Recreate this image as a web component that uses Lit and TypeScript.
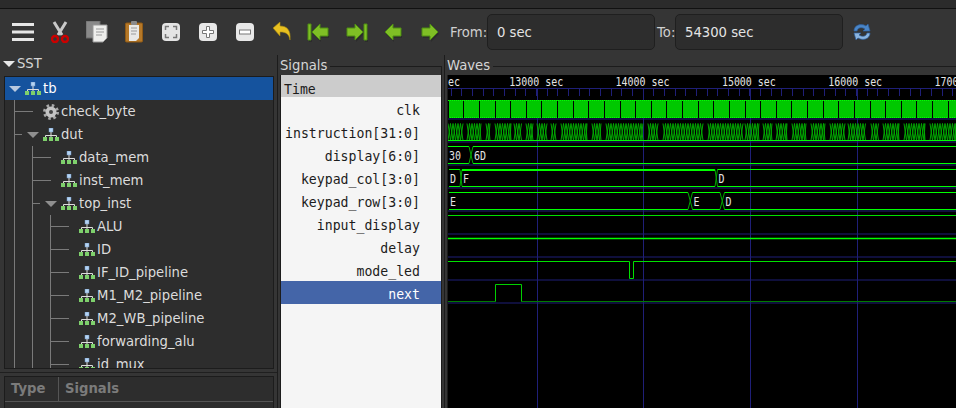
import { LitElement, html, css, svg } from 'lit';
import { customElement } from 'lit/decorators.js';

const RAIL = '#00ff00';
const DIM = '#00a800';
const GRID = '#1f1f78';

const TOP = (row: number) => 100.5 + row * 23;
const BOT = (row: number) => 117.5 + row * 23;

// where the instruction bus is toggling (start, end)
const BURSTS = [
  [448, 463], [467, 481], [486, 490], [495, 511], [514, 522], [526, 533], [537, 547], [551, 556],
  [561, 587], [592, 601], [606, 643], [648, 658], [663, 703], [708, 743], [745, 759], [763, 772],
  [776, 787], [792, 806], [811, 825], [830, 845], [848, 866], [871, 879], [883, 899], [904, 925], [930, 956],
];

const SIGNALS = ['clk', 'instruction[31:0]', 'display[6:0]', 'keypad_col[3:0]', 'keypad_row[3:0]', 'input_display', 'delay', 'mode_led'];

const TREE: [string, number, string][] = [
  ['check_byte', 1, 'gear'], ['dut', 1, 'open'], ['data_mem', 2, ''], ['inst_mem', 2, ''], ['top_inst', 2, 'open'],
  ['ALU', 3, ''], ['ID', 3, ''], ['IF_ID_pipeline', 3, ''], ['M1_M2_pipeline', 3, ''], ['M2_WB_pipeline', 3, ''],
  ['forwarding_alu', 3, ''], ['id_mux', 3, ''],
];

const hier = svg`
  <rect x="6" y="0" width="4" height="4" fill="#b4d4f4" stroke="#6f93c0" stroke-width=".5"/>
  <path d="M8 4v3M2.500 9V7.500h11V9M8 7v2" stroke="#ddd" stroke-width="1" fill="none"/>
  <rect x="0" y="9" width="4" height="4" fill="#7ed06c"/>
  <rect x="6" y="9" width="4" height="4" fill="#7ed06c"/>
  <rect x="12" y="9" width="4" height="4" fill="#7ed06c"/>`;

@customElement('app-root')
export class AppRoot extends LitElement {
  static styles = css`
    :host {
      display: block;
      width: 956px;
      height: 408px;
      overflow: hidden;
      background: #353535;
      color: #dcdcdc;
      font-family: 'DejaVu Sans', sans-serif;
      font-size: 13.2px;
    }
    .menu { height: 8px; background: #2b2b2b; border-bottom: 1px solid #111; }
    .toolbar { display: flex; align-items: center; height: 46px; }
    .tool { width: 37px; height: 24px; display: flex; justify-content: center; align-items: center; flex: none; }
    .tool svg { display: block; flex: none; }
    .lead { width: 4px; flex: none; }
    .lbl { color: #cfcfcf; flex: none; }
    .from { margin-left: 2px; width: 37px; }
    .to-lbl { margin-left: 2px; width: 18px; }
    .entry {
      width: 168px;
      height: 36px;
      box-sizing: border-box;
      border: 1px solid #1f1f1f;
      border-radius: 5px;
      background: #2d2d2d;
      padding-left: 9px;
      line-height: 36px;
      color: #e4e4e4;
      flex: none;
    }
    .main { display: flex; height: 353px; }

    .left { width: 278px; flex: none; padding-left: 4px; box-sizing: border-box; border-right: 1px solid #1c1c1c; }
    .sst { height: 17px; display: flex; align-items: center; gap: 2px; margin-left: -1px; color: #d6d6d6; }
    .tree {
      margin-top: 4px;
      height: 293px;
      width: 270px;
      border: 1px solid #1c1c1c;
      background: #2d2d2d;
      overflow: hidden;
      box-sizing: border-box;
    }
    .tree-row { height: 23px; display: flex; align-items: center; position: relative; }
    .tree-row.sel { background: #15539e; color: #fff; }
    .tree-row svg { display: block; flex: none; }
    .guide { position: absolute; top: 0; width: 1px; height: 23px; background: #7a7a7a; }
    .tick { position: absolute; top: 11px; height: 1px; background: #7a7a7a; }
    .arrow {
      width: 0; height: 0; flex: none;
      border-left: 6px solid transparent;
      border-right: 6px solid transparent;
      border-top: 6px solid #8f8f8f;
    }
    .tree .arrow { margin-right: 4px; }
    .sel .arrow { border-top-color: #b8c9e0; }
    .sst .arrow { border-top-color: #e8e8e8; }
    .tree-name { margin-left: 2px; white-space: nowrap; }
    .sep { height: 1px; background: #1f1f1f; margin: 3px 0 3px -4px; width: 277px; }
    .types {
      width: 270px;
      height: 40px;
      border: 1px solid #1c1c1c;
      background: #2d2d2d;
      box-sizing: border-box;
      display: flex;
      font-weight: bold;
      color: #7b7b7b;
    }
    .types span { height: 25px; line-height: 24px; border-bottom: 1px solid #555; box-sizing: border-box; }
    .types .t { width: 54px; padding-left: 6px; border-right: 1px solid #555; box-sizing: border-box; flex: none; }
    .types .s { flex: 1; padding-left: 6px; }

    .sig { width: 167px; flex: none; box-sizing: border-box; padding-left: 2px; border-right: 1px solid #1c1c1c; }
    .pane-title {
      height: 20px;
      line-height: 22px;
      width: fit-content;
      padding-right: 3px;
      position: relative;
      background: #353535;
      color: #d6d6d6;
      white-space: nowrap;
    }
    .frame {
      margin-top: -9px;
      padding-top: 8px;
      height: 400px;
      border-top: 1px solid #1c1c1c;
      border-left: 1px solid #1c1c1c;
    }
    .sig .frame { width: 160px; border-right: 1px solid #1c1c1c; }
    .sig-list {
      height: 333px;
      background: #f5f5f5;
      color: #1c1c1c;
      font-family: 'DejaVu Sans Mono', monospace;
      font-size: 13.2px;
    }
    .sig-row {
      height: 22px;
      line-height: 26px;
      margin-bottom: 1px;
      text-align: right;
      padding-right: 21px;
      white-space: nowrap;
    }
    .sig-row.time { background: #cccccc; text-align: left; padding: 0 0 0 3px; line-height: 29px; }
    .sig-row.sel { background: #4465a8; color: #fff; height: 23px; margin-top: -1px; line-height: 28px; }

    .wave { flex: 1; min-width: 0; padding-left: 2px; }
    .wave svg { display: block; }
    .lab { font-family: 'DejaVu Sans Mono', monospace; font-size: 12px; fill: #e4e4e4; }
  `;

  tool(icon: unknown) {
    return html`<div class="tool">${icon}</div>`;
  }

  greenArrow(d: string, w = 24) {
    return svg`<svg width="${w}" height="20" viewBox="0 0 ${w} 20">
      <path d="${d}" fill="#222" opacity=".45" transform="translate(1 2)"/>
      <path d="${d}" fill="#7fbf25" stroke="#4e8f12" stroke-width="1"/>
    </svg>`;
  }

  renderTree() {
    return TREE.map(([name, depth, kind]) => {
      const guides = [];
      for (let d = 0; d < depth; d++) {
        guides.push(html`<div class="guide" style="left:${9 + d * 18}px"></div>`);
      }
      const tickLeft = 10 + (depth - 1) * 18;
      return html`<div class="tree-row">
        ${guides}
        <div class="tick" style="left:${tickLeft}px;width:${kind === 'open' ? 7 : 18}px"></div>
        <div style="width:${(kind === 'open' ? 4 : 20) + depth * 18}px;flex:none"></div>
        ${kind === 'open' ? html`<div class="arrow"></div>` : ''}
        ${kind === 'gear'
          ? html`<svg width="16" height="16" viewBox="0 0 16 16">
              <circle cx="8" cy="8" r="6.500" fill="none" stroke="#a8a8a8" stroke-width="3" stroke-dasharray="2.500 2.600"/>
              <circle cx="8" cy="8" r="5.500" fill="#c4c4c4"/><circle cx="8" cy="8" r="2" fill="#444"/>
            </svg>`
          : html`<svg width="16" height="13">${hier}</svg>`}
        <span class="tree-name">${name}</span>
      </div>`;
    });
  }

  renderWave() {
    const off = 448; // svg starts at page x 448
    const X = (x: number) => Math.round(x - off) + 0.5;
    const label = (x: number, y: number, t: string) =>
      svg`<text class="lab" xml:space="preserve" transform="translate(${x} ${y}) scale(.83 1)">${t}</text>`;
    const majors = [536.5, 643, 750, 857];
    const ticks: number[] = [];
    for (let x = 450.7; x < 960; x += 10.67) ticks.push(x);
    const clkEdges: number[] = [];
    for (let x = 447.7; x < 960; x += 15.625) clkEdges.push(x);

    const hatch: string[] = [];
    BURSTS.forEach(([a, b]) => {
      const t = TOP(1), bt = BOT(1);
      for (let x = a; x < b - 0.5; x += 2.5) {
        const e = Math.min(x + 2.5, b);
        hatch.push(`M${x - off} ${t}L${e - off} ${bt}M${x - off} ${bt}L${e - off} ${t}`);
      }
    });

    const bus = (row: number, segs: [number, number, string][]) => {
      const t = TOP(row), b = BOT(row);
      return segs.map(([a, e, text], i) => {
        const next = segs[i + 1];
        const edge = next
          ? svg`<path d="M${e - off} ${t}L${next[0] - off} ${b}M${e - off} ${b}L${next[0] - off} ${t}" stroke="${DIM}" fill="none"/>`
          : null;
        return svg`<path d="M${a - off} ${t}H${e - off}M${a - off} ${b}H${e - off}" stroke="${RAIL}" fill="none"/>
          ${edge}${label(a - off + 1, b - 3.500, text)}`;
      });
    };

    return svg`<svg width="508" height="337" viewBox="0 75 508 337">
      <rect x="0" y="75" width="508" height="337" fill="#000"/>
      ${majors.map((x) => svg`<line x1="${X(x)}" x2="${X(x)}" y1="88" y2="412" stroke="${GRID}"/>`)}
      <line x1="0" x2="508" y1="88.500" y2="88.500" stroke="${GRID}"/>
      ${ticks.map((x) => svg`<line x1="${X(x)}" x2="${X(x)}" y1="88" y2="96" stroke="${GRID}"/>`)}
      ${label(0, 86, 'ec')}
      ${['13000 sec', '14000 sec', '15000 sec', '16000 sec', '1700'].map((v, i) => label(61.3 + i * 106.3, 86, v))}
      ${[0, 1, 2, 3, 4, 5, 6, 7, 8].map((r) => svg`<line x1="0" x2="508" y1="${119 + r * 23}" y2="${119 + r * 23}" stroke="${GRID}"/>`)}

      <rect x="0" y="100" width="508" height="18" fill="#00c800"/>
      <path d="M0 100.500H508M0 117.500H508" stroke="${RAIL}" stroke-dasharray="1 1"/>
      ${clkEdges.map((x) => svg`<line x1="${X(x)}" x2="${X(x)}" y1="101" y2="118" stroke="#000"/>`)}

      <path d="${hatch.join('')}" stroke="#00a800" fill="none"/>
      <line x1="0" x2="508" y1="${BOT(1)}" y2="${BOT(1)}" stroke="${RAIL}"/>

      ${bus(2, [[448, 469, '30'], [473, 956, '6D']])}
      ${bus(3, [[449, 460, 'D'], [462, 715, 'F'], [717.500, 956, 'D']])}
      <line x1="${462 - off}" x2="${715 - off}" y1="170.500" y2="170.500" stroke="${RAIL}"/>
      ${bus(4, [[449, 688, 'E'], [692.500, 720, 'E'], [724.500, 956, 'D']])}

      <line x1="0" x2="508" y1="215.500" y2="215.500" stroke="#00e000"/>
      <line x1="0" x2="508" y1="238.500" y2="238.500" stroke="${RAIL}" stroke-width="1.400"/>
      <path d="M0 261.500H${X(629)}V278.500H${X(633)}V261.500H508" stroke="#00e000" fill="none"/>
      <path d="M0 301.500H${X(495)}M${X(521)} 301.500H508" stroke="#007c00" fill="none"/>
      <path d="M${X(495)} 301.500V284.500H${X(521)}V301.500" stroke="#00d000" fill="none"/>
    </svg>`;
  }

  render() {
    return html`
      <div class="menu"></div>
      <div class="toolbar">
        <div class="lead"></div>
        ${this.tool(svg`<svg width="22" height="20"><path d="M0 2.500h22M0 10h22M0 17.500h22" stroke="#e6e6e6" stroke-width="3"/></svg>`)}
        ${this.tool(svg`<svg width="18" height="22"><path d="M3 1l8 13M15 1L7 14" stroke="#c9c9c9" stroke-width="3"/><circle cx="4" cy="18" r="3" fill="none" stroke="#cc0000" stroke-width="2.400"/><circle cx="14" cy="18" r="3" fill="none" stroke="#cc0000" stroke-width="2.400"/></svg>`)}
        ${this.tool(svg`<svg width="22" height="22"><rect x="0" y="0" width="14" height="17" fill="#8a8a8a" stroke="#6b6b6b"/><path d="M7 4h14v13l-4 4H7z" fill="#eeeeec" stroke="#999"/><path d="M10 8h8M10 11h8M10 14h6" stroke="#9a9a9a"/></svg>`)}
        ${this.tool(svg`<svg width="18" height="22"><rect x=".5" y="2" width="17" height="19" rx="1" fill="#b57828" stroke="#8f5a16"/><path d="M4 4h10v13l-3 3H4z" fill="#e8e8e6"/><path d="M6 7h6M6 10h6M6 13h5" stroke="#9a9a9a"/><rect x="6" y="0" width="6" height="4" rx="1" fill="#8a8a8a"/></svg>`)}
        ${this.tool(svg`<svg width="18" height="18"><rect width="18" height="18" rx="4" fill="#e4e4e4"/><path d="M3.500 7V3.500H7M11 3.500h3.500V7M14.500 11v3.500H11M7 14.500H3.500V11" stroke="#777" stroke-width="1.500" fill="none"/></svg>`)}
        ${this.tool(svg`<svg width="18" height="18"><rect width="18" height="18" rx="4" fill="#e8e8e8"/><path d="M7.500 3.500h3v4h4v3h-4v4h-3v-4h-4v-3h4z" fill="#fff" stroke="#777"/></svg>`)}
        ${this.tool(svg`<svg width="18" height="18"><rect width="18" height="18" rx="4" fill="#e8e8e8"/><rect x="3.500" y="7" width="11" height="4" fill="#fff" stroke="#777"/></svg>`)}
        ${this.tool(svg`<svg width="18" height="20"><path d="M0 6l7-6v4c7 0 11 4 10 14-1-6-4-8-10-8v4z" fill="#e8c020" stroke="#a88a10" stroke-width=".6"/></svg>`)}
        ${this.tool(this.greenArrow('M1 2h3v16H1zM5 10l8-8v4h8v8h-8v4z'))}
        ${this.tool(this.greenArrow('M3 6h8V2l8 8-8 8v-4H3zM20 2h3v16h-3z'))}
        ${this.tool(this.greenArrow('M4 10l8-8v4h8v8h-8v4z'))}
        ${this.tool(this.greenArrow('M4 6h8V2l8 8-8 8v-4H4z'))}
        <span class="lbl from">From:</span>
        <div class="entry">0 sec</div>
        <span class="lbl to-lbl">To:</span>
        <div class="entry">54300 sec</div>
        <div class="tool">
          <svg width="20" height="20" viewBox="0 0 20 20">
            <path d="M2 9C2 3 9 1 14 4l2-2 2 7h-7l2-2C10 5 6 5 5 9z" fill="#4a86c8" stroke="#2c5f9e" stroke-width=".7"/>
            <path d="M18 11c0 6-7 8-12 5l-2 2-2-7h7l-2 2c3 2 7 2 8-2z" fill="#8ab4e0" stroke="#2c5f9e" stroke-width=".7"/>
          </svg>
        </div>
      </div>
      <div class="main">
        <div class="left">
          <div class="sst"><div class="arrow"></div><span>SST</span></div>
          <div class="tree">
            <div class="tree-row sel">
              <div style="width:4px;flex:none"></div><div class="arrow"></div>
              <svg width="16" height="13">${hier}</svg><span class="tree-name">tb</span>
            </div>
            ${this.renderTree()}
          </div>
          <div class="sep"></div>
          <div class="types"><span class="t">Type</span><span class="s">Signals</span></div>
        </div>
        <div class="sig">
          <div class="pane-title">Signals</div>
          <div class="frame">
            <div class="sig-list">
              <div class="sig-row time">Time</div>
              ${SIGNALS.map((name) => html`<div class="sig-row">${name}</div>`)}
              <div class="sig-row sel">next</div>
            </div>
          </div>
        </div>
        <div class="wave">
          <div class="pane-title">Waves</div>
          <div class="frame">${this.renderWave()}</div>
        </div>
      </div>
    `;
  }
}
